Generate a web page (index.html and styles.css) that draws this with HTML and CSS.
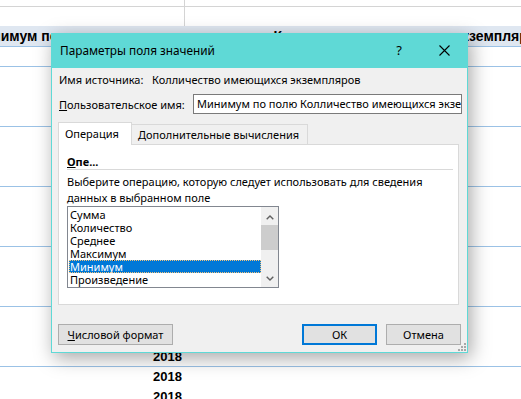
FILE: index.html
```html
<!DOCTYPE html>
<html lang="ru">
<head>
    <meta charset="UTF-8">
    <title>Параметры поля значений</title>
    <link rel="stylesheet" href="styles.css">
</head>
<body>
    <div class="sheet">
        <div class="row row-top"><div class="cell col-a"></div><div class="cell col-b"></div></div>
        <div class="row row-top2"><div class="cell col-a"></div><div class="cell col-b"></div></div>
        <div class="row row-head">
            <div class="head-a">Минимум по полю</div>
            <div class="head-b">Колличество имеющихся экземпляров</div>
        </div>
        <div class="band band-first"></div>
        <div class="band"></div>
        <div class="band"></div>
        <div class="band"></div>
        <div class="band"></div>
        <div class="band">
            <div class="yr"></div>
            <div class="yr"></div>
            <div class="yr">2018</div>
        </div>
        <div class="band">
            <div class="yr">2018</div>
            <div class="yr">2018</div>
            <div class="yr">2018</div>
        </div>
    </div>

    <div class="dialog">
        <div class="titlebar">
            <span class="title">Параметры поля значений</span>
            <span class="help">?</span>
            <svg class="close" width="11" height="11" viewBox="0 0 11 11">
                <path d="M0.5 0.5 L10.5 10.5 M10.5 0.5 L0.5 10.5" stroke="#000" stroke-width="1.1" fill="none"/>
            </svg>
        </div>
        <div class="dlg-body">
            <div class="src-row">
                <span class="src-label">Имя источника:</span>
                <span>Колличество имеющихся экземпляров</span>
            </div>
            <div class="name-row">
                <span class="name-label"><u>П</u>ользовательское имя:</span>
                <div class="name-input">Минимум по полю Колличество имеющихся экземпляров</div>
            </div>
            <div class="tabs">
                <div class="tab tab-active">Операция</div>
                <div class="tab">Дополнительные вычисления</div>
            </div>
            <div class="panel">
                <div class="op-title"><u>О</u>пе...</div>
                <div class="op-desc">Выберите операцию, которую следует использовать для сведения данных в выбранном поле</div>
                <div class="listbox">
                    <div class="items">
                        <div class="item">Сумма</div>
                        <div class="item">Количество</div>
                        <div class="item">Среднее</div>
                        <div class="item">Максимум</div>
                        <div class="item item-sel">Минимум</div>
                        <div class="item">Произведение</div>
                    </div>
                    <div class="scrollbar">
                        <div class="sb-btn sb-up">
                            <svg width="8" height="5" viewBox="0 0 8 5"><path d="M0.7 4.3 L4 1 L7.3 4.3" stroke="#606060" stroke-width="1.4" fill="none"/></svg>
                        </div>
                        <div class="sb-thumb"></div>
                        <div class="sb-space"></div>
                        <div class="sb-btn sb-down">
                            <svg width="8" height="5" viewBox="0 0 8 5"><path d="M0.7 0.7 L4 4 L7.3 0.7" stroke="#606060" stroke-width="1.4" fill="none"/></svg>
                        </div>
                    </div>
                </div>
            </div>
            <div class="buttons">
                <div class="btn btn-format"><u>Ч</u>исловой формат</div>
                <div class="btn btn-ok">ОК</div>
                <div class="btn">Отмена</div>
            </div>
        </div>
        <svg class="grip" width="8" height="8" viewBox="0 0 8 8">
            <rect x="6" y="0" width="2" height="2" fill="#a8a8a8"/>
            <rect x="3" y="3" width="2" height="2" fill="#a8a8a8"/>
            <rect x="6" y="3" width="2" height="2" fill="#a8a8a8"/>
            <rect x="0" y="6" width="2" height="2" fill="#a8a8a8"/>
            <rect x="3" y="6" width="2" height="2" fill="#a8a8a8"/>
            <rect x="6" y="6" width="2" height="2" fill="#a8a8a8"/>
        </svg>
    </div>
</body>
</html>
```

FILE: styles.css
```css
body {
    margin: 0;
    background-color: #fff;
    overflow: hidden;
    height: 399px;
    font-family: "Noto Sans", "Liberation Sans", sans-serif;
}

/* spreadsheet behind the dialog */
.sheet {
    display: flex;
    flex-direction: column;
    width: 521px;
    height: 399px;
    overflow: hidden;
}
.row {
    display: flex;
    flex-shrink: 0;
}
.row-top {
    height: 6px;
    border-bottom: 1px solid #d4d4d4;
}
.row-top2 {
    height: 19px;
}
.col-a {
    width: 184px;
    border-right: 1px solid #d4d4d4;
}
.col-b {
    flex: 1;
}
.row-head {
    height: 20px;
    background-color: #dfe7f1;
    border-bottom: 1px solid #9bc2e6;
    font-family: "Liberation Sans", sans-serif;
    font-weight: bold;
    font-size: 14px;
    line-height: 20px;
    white-space: nowrap;
    overflow: hidden;
}
.head-a {
    width: 184px;
    flex-shrink: 0;
    text-indent: -28px;
    overflow: hidden;
}
.head-b {
    flex: 1;
    display: flex;
    justify-content: flex-end;
    margin-right: -24px;
}
.band {
    height: 59px;
    flex-shrink: 0;
    border-bottom: 1px solid #9bc2e6;
}
.band-first {
    height: 19px;
}
.yr {
    width: 182px;
    height: 20px;
    line-height: 20px;
    text-align: right;
    font-family: "Liberation Sans", sans-serif;
    font-weight: bold;
    font-size: 13px;
}

/* dialog window */
.dialog {
    position: absolute;
    left: 51px;
    top: 33px;
    width: 417px;
    box-sizing: border-box;
    border: 1px solid #5fd9d6;
    background-color: #f0f0f0;
    box-shadow: 3px 5px 18px rgba(0, 0, 0, 0.35);
    display: flex;
    flex-direction: column;
    font-size: 11px;
    color: #000;
}
.titlebar {
    height: 32px;
    background-color: #5fd9d6;
    display: flex;
    align-items: center;
    padding: 0 17px 2px 8px;
}
.title {
    flex: 1;
    font-size: 11.8px;
}
.help {
    font-size: 13px;
    margin-right: 37px;
}
.dlg-body {
    padding: 4px 5px 7px 6px;
    display: flex;
    flex-direction: column;
}
.src-row {
    display: flex;
    height: 16px;
    line-height: 16px;
    padding-left: 1px;
    white-space: nowrap;
}
.src-label {
    width: 93px;
}
.name-row {
    display: flex;
    align-items: center;
    height: 20px;
    margin-top: 6px;
    padding-left: 1px;
}
.name-label {
    width: 134px;
    white-space: nowrap;
}
.name-input {
    flex: 1;
    height: 20px;
    box-sizing: border-box;
    border: 1px solid #7a7a7a;
    background-color: #fff;
    padding: 0 3px;
    line-height: 18px;
    white-space: nowrap;
    overflow: hidden;
}
.tabs {
    display: flex;
    align-items: flex-end;
    height: 22px;
    margin-top: 8px;
}
.tab {
    height: 20px;
    box-sizing: border-box;
    width: 176px;
    border: 1px solid #d9d9d9;
    border-bottom: none;
    border-left: none;
    line-height: 19px;
    padding-left: 6px;
    white-space: nowrap;
}
.tab-active {
    width: 74px;
    height: 23px;
    margin-bottom: -1px;
    border-left: 1px solid #d9d9d9;
    background-color: #fff;
    line-height: 21px;
    padding-left: 6px;
    position: relative;
    z-index: 1;
}
.panel {
    height: 161px;
    box-sizing: border-box;
    margin-right: 3px;
    border: 1px solid #d9d9d9;
    background-color: #fff;
    padding: 0 5px 0 8px;
}
.op-title {
    margin-top: 9px;
    height: 15px;
    line-height: 15px;
    font-weight: bold;
    border-bottom: 1px solid #d9d9d9;
}
.op-desc {
    margin-top: 4px;
    line-height: 16px;
    width: 370px;
}
.listbox {
    width: 212px;
    height: 82px;
    box-sizing: border-box;
    border: 1px solid #828790;
    display: flex;
}
.items {
    flex: 1;
    padding: 1px 0 1px 1px;
}
.item {
    height: 13px;
    line-height: 13px;
    padding-left: 1px;
    white-space: nowrap;
}
.item-sel {
    background-color: #0078d7;
    color: #fff;
    outline: 1px dotted #f2c27a;
    outline-offset: -1px;
}
.scrollbar {
    width: 17px;
    background-color: #f0f0f0;
    display: flex;
    flex-direction: column;
}
.sb-btn {
    height: 17px;
    display: flex;
    justify-content: center;
}
.sb-up {
    padding-top: 8px;
    box-sizing: border-box;
}
.sb-down {
    padding-top: 6px;
    box-sizing: border-box;
}
.sb-thumb {
    height: 25px;
    margin-top: 1px;
    background-color: #cdcdcd;
}
.sb-space {
    flex: 1;
}
.buttons {
    display: flex;
    margin-top: 19px;
    height: 21px;
}
.btn {
    width: 75px;
    height: 21px;
    box-sizing: border-box;
    border: 1px solid #adadad;
    background-color: #e1e1e1;
    line-height: 19px;
    text-align: center;
    white-space: nowrap;
}
.btn-format {
    width: 115px;
    margin-right: auto;
}
.btn-ok {
    border: 2px solid #0078d7;
    line-height: 17px;
    margin-right: 9px;
}
.buttons .btn:last-child {
    margin-right: 1px;
}
.grip {
    position: absolute;
    right: 1px;
    bottom: 1px;
}
```
